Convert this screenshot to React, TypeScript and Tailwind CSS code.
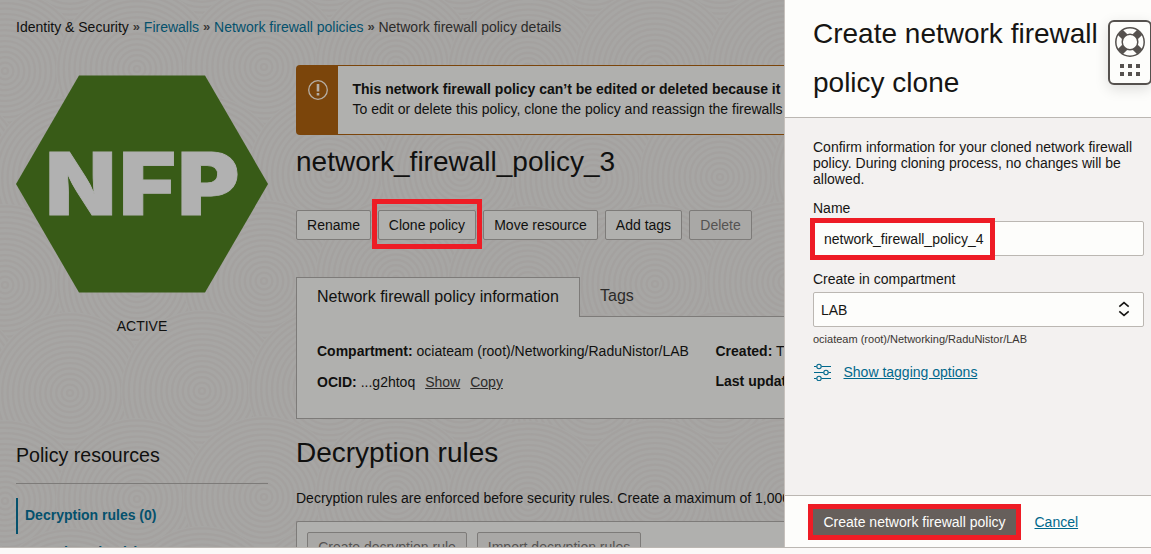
import type { ReactNode } from "react";

const COLUMNS = [-57, 73, 203, 333, 463, 593, 723, 853];
const ROWS = [-40, 68, 175, 282, 390, 498, 606];
const RINGS = [3, 8.4, 13.8, 19.2, 24.6, 30, 35.4, 40.8, 46.2, 51.6, 57, 62.4, 67.8, 73.2, 78.6];

function Swirls() {
  return (
    <svg className="absolute inset-0 h-full w-full" viewBox="0 0 784 547" preserveAspectRatio="xMinYMin slice" aria-hidden="true">
      {ROWS.map((cy, row) =>
        COLUMNS.map((x, col) => {
          const cx = x + (row % 2 === 0 ? 0 : -65) - ((col * 3) % 5);
          const y = cy + ((col * 7) % 9) - 4;
          return (
            <g key={`${row}-${col}`} fill="none" stroke="#a19f9d" strokeWidth="2.2">
              <circle cx={cx} cy={y} r="81" fill="#a7a6a4" stroke="none" />
              {RINGS.map((r) => (
                <circle key={r} cx={cx} cy={y} r={r} opacity="0.6" />
              ))}
            </g>
          );
        }),
      )}
    </svg>
  );
}

function Breadcrumbs() {
  const sep = <span className="mx-[4px] w-[7px] text-[13px] font-bold text-[#3a3938]">»</span>;
  return (
    <nav className="flex h-5 items-center whitespace-nowrap text-[#10100f]">
      <span>Identity &amp; Security</span>
      {sep}
      <a className="text-[#04516d]">Firewalls</a>
      {sep}
      <a className="text-[#04516d]">Network firewall policies</a>
      {sep}
      <span className="text-[#2c2b2a]">Network firewall policy details</span>
    </nav>
  );
}

function Hexagon() {
  return (
    <svg className="block h-[218px] w-[252px]" viewBox="0 0 252 218">
      <polygon points="63,0.5 189,0.5 252,109 189,217.5 63,217.5 0,109" fill="#385b17" />
      <g fill="#b1b1b1" stroke="#b1b1b1" strokeWidth="0.8" fontFamily="Inter, sans-serif" fontWeight="900" fontSize="86">
        <text x="29.5" y="139.700" textLength="70.500" lengthAdjust="spacingAndGlyphs">N</text>
        <text x="103" y="139.700" textLength="57" lengthAdjust="spacingAndGlyphs">F</text>
        <text x="161.500" y="139.700" textLength="62" lengthAdjust="spacingAndGlyphs">P</text>
      </g>
    </svg>
  );
}

function Sidebar() {
  return (
    <aside className="w-[252px] shrink-0 pt-[10px]">
      <Hexagon />
      <div className="mt-[23px] h-5 text-center leading-5">ACTIVE</div>
      <h2 className="mt-[104px] h-11 border-b border-[#7d7b79] text-[19.6px] leading-[30px]">Policy resources</h2>
      <ul className="mt-[14px] font-bold text-[#04516d]">
        <li className="h-9 border-l-2 border-[#04516d] pl-[7px] leading-[35px]">Decryption rules (0)</li>
        <li className="h-9 border-l-2 border-transparent pl-[7px] leading-[37px]">Security rules (0)</li>
      </ul>
    </aside>
  );
}

function PageButton({ children, width, muted }: { children: ReactNode; width: string; muted?: boolean }) {
  return (
    <button
      className={`h-[30px] shrink-0 rounded-[2px] border border-[#7d7b79] leading-[28px] ${width} ${
        muted ? "bg-[#a9a8a6] text-[#555352]" : "bg-[#b0b0ae] text-[#10100f]"
      }`}
    >
      {children}
    </button>
  );
}

function Banner() {
  return (
    <div className="flex h-[70px] rounded-l-[4px] border border-r-0 border-[#7b450b] bg-[#b0b0ae]">
      <div className="w-[41px] shrink-0 bg-[#7b450b] pt-[14px] pl-[11px]">
        <svg width="20" height="20" viewBox="0 0 20 20" fill="none" stroke="#b5aea5">
          <circle cx="10" cy="10" r="9.3" strokeWidth="1.3" />
          <path d="M10 4v7.5M10 13v2.4" strokeWidth="2.6" />
        </svg>
      </div>
      <div className="pt-[13px] pl-[14.5px] leading-5 whitespace-nowrap">
        <div className="font-bold">This network firewall policy can’t be edited or deleted because it</div>
        <div>To edit or delete this policy, clone the policy and reassign the firewalls</div>
      </div>
    </div>
  );
}

function Details() {
  return (
    <div className="mt-[37px] whitespace-nowrap">
      <div className="flex h-[39px] text-[16px]">
        <div className="relative z-10 h-[40px] w-[284px] border border-b-0 border-[#7d7b79] bg-[#b0b0ae] pl-5 leading-[38px]">
          Network firewall policy information
        </div>
        <div className="pl-5 leading-[38px] text-[#2c2b2a]">Tags</div>
      </div>
      <div className="flex h-[103px] border border-r-0 border-[#7d7b79] bg-[#b0b0ae] pt-6 pl-5 leading-5">
        <div className="w-[398.5px] shrink-0">
          <div>
            <b>Compartment:</b> ociateam (root)/Networking/RaduNistor/LAB
          </div>
          <div className="mt-[11px] flex">
            <b className="mr-1">OCID:</b>...g2htoq
            <a className="ml-[10px] text-[#2c2b2a] underline">Show</a>
            <a className="ml-[10px] text-[#2c2b2a] underline">Copy</a>
          </div>
        </div>
        <div>
          <div>
            <b>Created:</b> T
          </div>
          <div className="mt-[10px]">
            <b>Last updated:</b>
          </div>
        </div>
      </div>
    </div>
  );
}

function Content() {
  return (
    <main className="w-[488px] shrink-0">
      <Banner />
      <h1 className="mt-[7px] h-10 text-[28px] leading-10">network_firewall_policy_3</h1>
      <div className="relative mt-7 flex gap-[7px]">
        <PageButton width="w-[75px]">Rename</PageButton>
        <PageButton width="w-[98px]">Clone policy</PageButton>
        <PageButton width="w-[115px]">Move resource</PageButton>
        <PageButton width="w-[77px]">Add tags</PageButton>
        <PageButton width="w-[63px]" muted>Delete</PageButton>
        <div className="absolute -top-[11px] left-[76px] h-[50px] w-[110px] border-[5px] border-[#ee1c25]" />
      </div>
      <Details />
      <h2 className="mt-[14px] h-10 text-[28px] leading-10">Decryption rules</h2>
      <p className="mt-[15px] h-5 leading-5 whitespace-nowrap">
        Decryption rules are enforced before security rules. Create a maximum of 1,000
      </p>
      <div className="mt-[13px] flex h-20 gap-[10px] rounded-tl-[2px] border border-r-0 border-[#7d7b79] bg-[#b0b0ae] p-[10px]">
        <PageButton width="w-[160px]" muted>Create decryption rule</PageButton>
        <PageButton width="w-[164px]" muted>Import decryption rules</PageButton>
      </div>
    </main>
  );
}

function HelpWidget() {
  return (
    <div className="absolute top-5 -right-px flex h-[65px] w-11 flex-col items-center rounded-[6px] border-2 border-[#55514e] bg-[#fdfdfb] pt-[5px] shadow-[0_4px_14px_rgba(0,0,0,0.13)]">
      <svg width="30" height="30" viewBox="0 0 30 30" fill="none" stroke="#55514e">
        <circle cx="15" cy="15" r="14.2" strokeWidth="1.5" />
        <circle cx="15" cy="15" r="7.8" strokeWidth="1.5" />
        <path d="M5.200 5.200l4.600 4.600M24.800 5.200l-4.600 4.600M5.200 24.800l4.600-4.600M24.800 24.800l-4.600-4.600" strokeWidth="7.2" />
      </svg>
      <div className="mt-[7px] grid grid-cols-3 gap-1">
        {[0, 1, 2, 3, 4, 5].map((i) => (
          <span key={i} className="h-1 w-1 bg-[#55514e]" />
        ))}
      </div>
    </div>
  );
}

function Drawer() {
  return (
    <section className="relative flex w-[367px] shrink-0 flex-col overflow-hidden border-l border-[#c6c1bd] bg-[#f3f1f0] text-[#161513]">
      <header className="h-[118px] border-b border-[#bbb7b2] bg-[#fdfdfb] pt-[9px] pl-7">
        <h2 className="w-[300px] text-[28px] leading-[49px]">Create network firewall policy clone</h2>
      </header>
      <div className="flex-1 pt-[21px] pr-[7px] pl-7">
        <p className="w-[328px] leading-4">
          Confirm information for your cloned network firewall policy. During cloning process, no changes will be allowed.
        </p>
        <div className="mt-[11px] h-5 leading-5">Name</div>
        <div className="relative mt-[3px] h-[35px] rounded-[2px] border border-[#bbb7b2] bg-[#fdfdfb] pl-[10px] leading-[34px]">
          network_firewall_policy_4
          <div className="absolute -top-1 -left-1 h-[42px] w-[185px] border-[5px] border-[#ee1c25]" />
        </div>
        <div className="mt-[13px] h-5 leading-5">Create in compartment</div>
        <div className="mt-[3px] flex h-[35px] items-center justify-between rounded-[2px] border border-[#bbb7b2] bg-[#fdfdfb] pr-[13px] pl-[7px]">
          <span className="pt-px">LAB</span>
          <svg className="-mt-px" width="12" height="16" viewBox="0 0 12 16" fill="none" stroke="#161513" strokeWidth="1.6">
            <path d="M1.300 5.600L6 1.600l4.700 4M1.300 10.400L6 14.400l4.700-4" />
          </svg>
        </div>
        <div className="mt-[5px] h-[14px] text-[11px] leading-[14px] text-[#3a3632]">ociateam (root)/Networking/RaduNistor/LAB</div>
        <div className="mt-4 flex h-5 items-center text-[#00688c]">
          <svg width="19" height="18" viewBox="0 0 19 18" fill="none" stroke="#00688c" strokeWidth="1.1">
            <path d="M1 3.500h2.500M8.500 3.500H18M1 9.500h9.500M15.500 9.500H18M1 15.500h2.500M8.500 15.500H18" />
            <circle cx="6" cy="3.5" r="2.2" />
            <circle cx="13" cy="9.5" r="2.2" />
            <circle cx="6" cy="15.5" r="2.2" />
          </svg>
          <a className="ml-[11.5px] underline">Show tagging options</a>
        </div>
      </div>
      <footer className="flex h-[52px] items-center border-t border-[#bbb7b2] bg-[#fdfdfb] pl-[23px]">
        <button className="h-9 w-[213px] border-[5px] border-[#ee1c25] bg-[#665f5b] leading-[26px] text-[#fdfdfb]">
          Create network firewall policy
        </button>
        <a className="ml-[13.5px] pt-px text-[#00688c] underline">Cancel</a>
      </footer>
      <HelpWidget />
    </section>
  );
}

export default function App() {
  return (
    <div className="flex h-[554px] w-[1151px] flex-col overflow-hidden bg-[#fbf9f8] font-['Liberation_Sans',Arial,sans-serif] text-[14px] text-[#10100f]">
      <div className="flex h-[547px] shrink-0 overflow-hidden">
        <div className="relative w-[784px] shrink-0 overflow-hidden bg-[#a6a5a3]">
          <Swirls />
          <div className="relative pt-[17px] pl-4">
            <Breadcrumbs />
            <div className="mt-7 flex gap-7">
              <Sidebar />
              <Content />
            </div>
          </div>
        </div>
        <Drawer />
      </div>
      <div className="h-px shrink-0 bg-[#bbb7b2]" />
    </div>
  );
}
